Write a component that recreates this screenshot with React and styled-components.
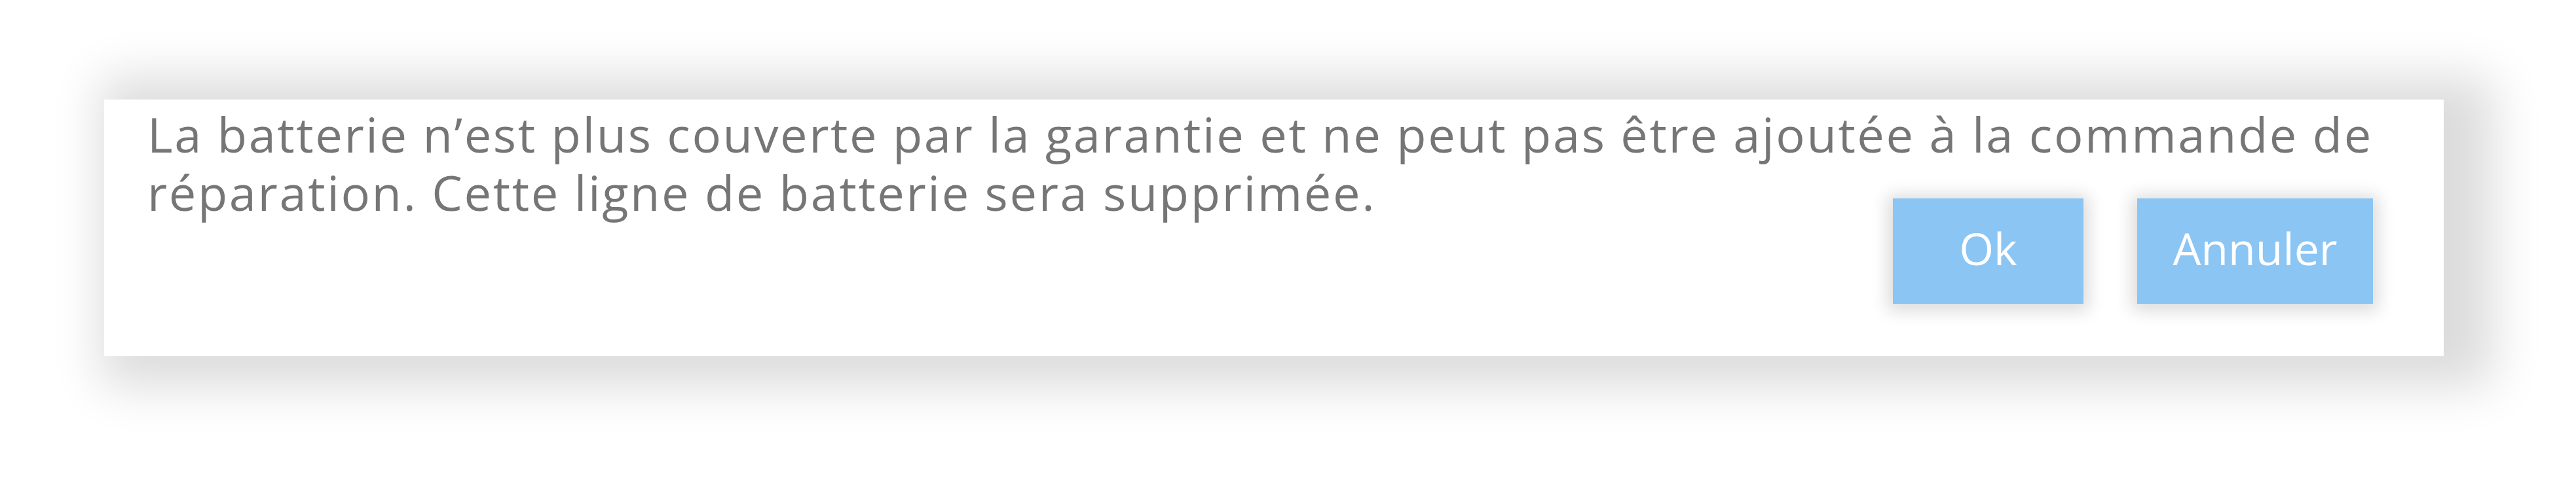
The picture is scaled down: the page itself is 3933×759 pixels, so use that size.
import React from 'react'
import styled, { createGlobalStyle } from 'styled-components'

const GlobalStyle = createGlobalStyle`
  html, body {
    margin: 0;
    padding: 0;
    background: #ffffff;
  }
`

const Page = styled.div`
  width: 3933px;
  height: 759px;
  padding: 152px 0 0 159px;
  box-sizing: border-box;
`

const Dialog = styled.div`
  width: 3572px;
  height: 392px;
  box-sizing: border-box;
  padding: 8px 108px 0 66px;
  background: #ffffff;
  box-shadow: 35px 6px 70px 40px rgba(0, 0, 0, 0.14);
  display: flex;
  flex-direction: column;
`

const Message = styled.p`
  margin: 0;
  font-family: "Open Sans", sans-serif;
  font-size: 74px;
  line-height: 89px;
  letter-spacing: 2.6px;
  color: #767676;
  max-width: 3480px;
`

const Actions = styled.div`
  display: flex;
  justify-content: flex-end;
  gap: 82px;
  margin-top: -35px;
`

const ActionButton = styled.button`
  width: ${p => p.$width}px;
  height: 161px;
  border: 0;
  border-radius: 0;
  padding: 0 0 10px;
  background: #8ac5f4;
  color: #ffffff;
  font-family: "Open Sans", sans-serif;
  font-size: 68px;
  box-shadow: 0 3px 24px 8px rgba(0, 0, 0, 0.14);
  cursor: pointer;
`

const App = () => <Page>
  <GlobalStyle />
  <Dialog>
    <Message>
      La batterie n’est plus couverte par la garantie et ne peut pas être ajoutée à la commande de réparation. Cette ligne de batterie sera supprimée.
    </Message>
    <Actions>
      <ActionButton type="button" $width={291}>Ok</ActionButton>
      <ActionButton type="button" $width={360}>Annuler</ActionButton>
    </Actions>
  </Dialog>
</Page>

export default App
